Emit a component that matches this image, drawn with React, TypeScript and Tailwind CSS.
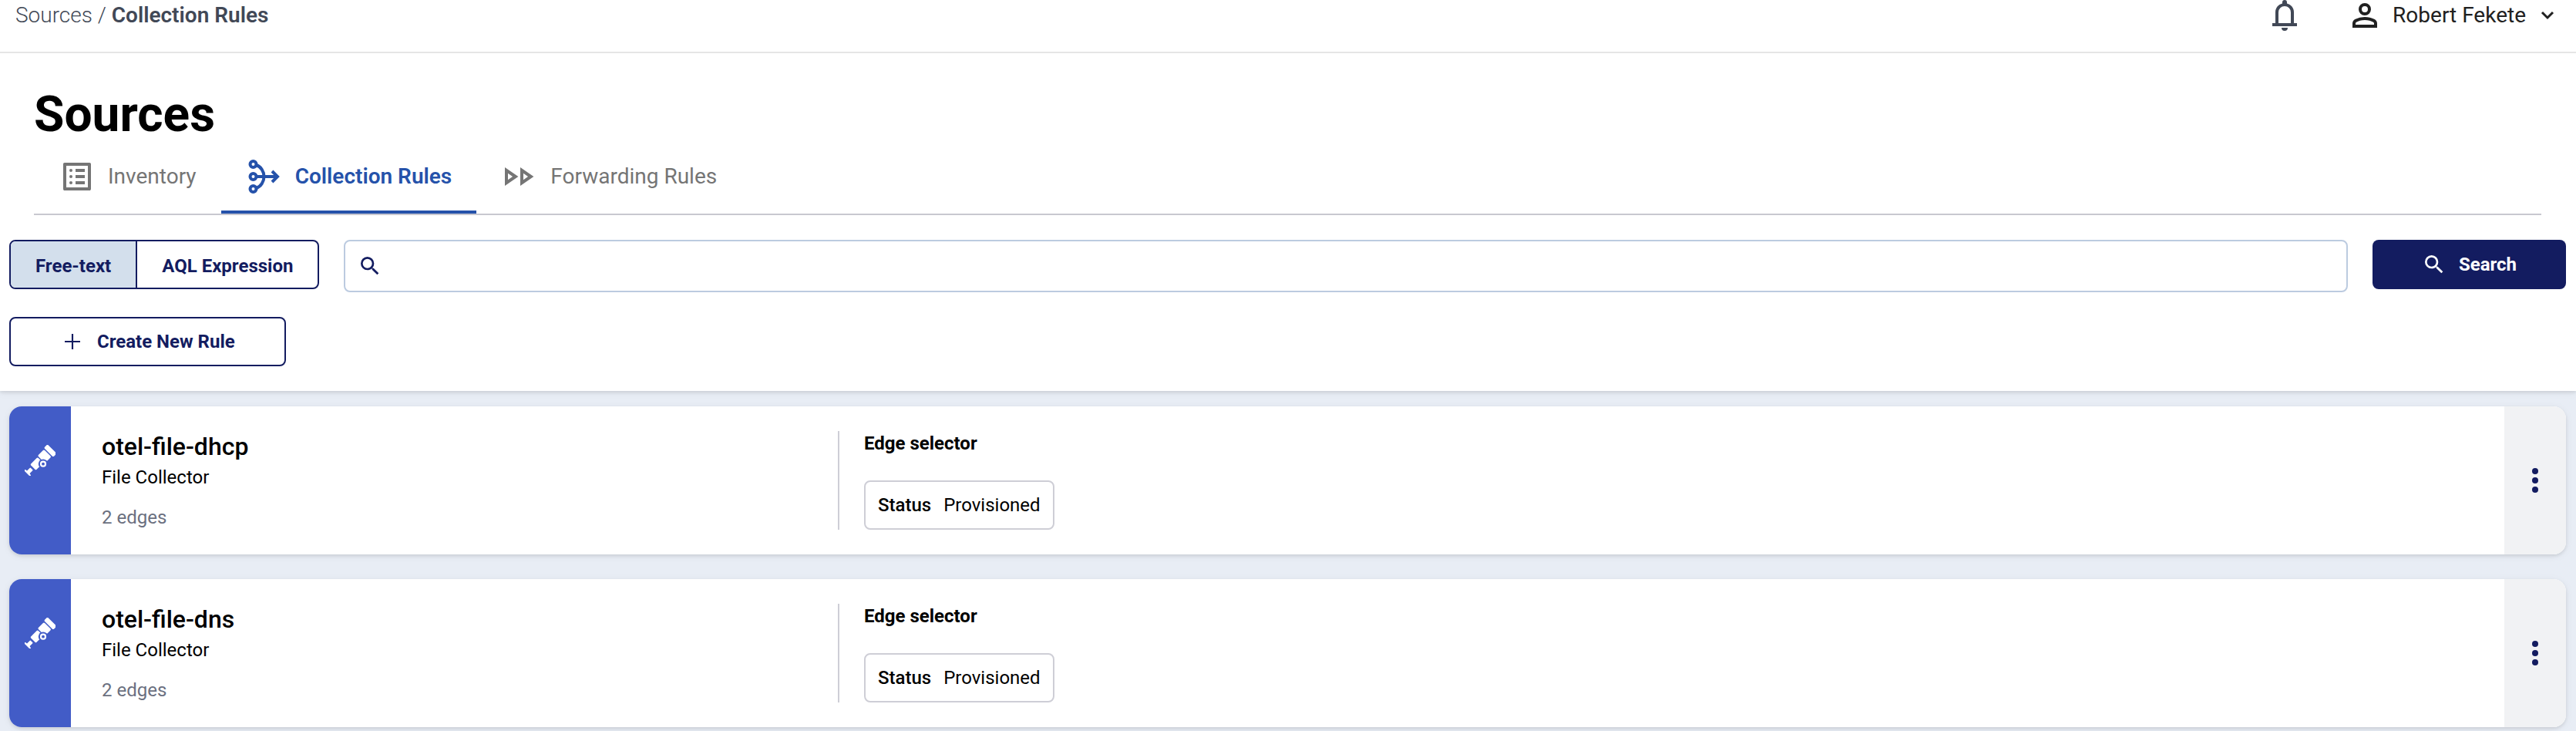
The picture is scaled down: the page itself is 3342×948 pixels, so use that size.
import { useState } from "react";

type Rule = {
  name: string;
  kind: string;
  edges: number;
  selector: { label: string; value: string };
};

const rules: Rule[] = [
  { name: "otel-file-dhcp", kind: "File Collector", edges: 2, selector: { label: "Status", value: "Provisioned" } },
  { name: "otel-file-dns", kind: "File Collector", edges: 2, selector: { label: "Status", value: "Provisioned" } },
];

const BellIcon = () => (
  <svg viewBox="0 0 24 24" className="size-12" fill="currentColor" aria-hidden="true">
    <path d="M4 19v-2h2v-7c0-1.38.42-2.61 1.25-3.69.83-1.07 1.92-1.78 3.25-2.11v-.7a1.5 1.5 0 0 1 3 0v.7c1.33.33 2.42 1.04 3.25 2.11.83 1.08 1.25 2.31 1.25 3.69v7h2v2H4zm8 3a2 2 0 0 1-2-2h4a2 2 0 0 1-2 2zm-4-5h8v-7a4 4 0 0 0-8 0v7z" />
  </svg>
);

const UserIcon = () => (
  <svg viewBox="0 0 24 24" className="size-12" fill="currentColor" aria-hidden="true">
    <path d="M12 12a4 4 0 1 1 0-8 4 4 0 0 1 0 8zm-8 8v-2.8c0-.57.15-1.09.44-1.56.29-.47.68-.83 1.16-1.09A14.76 14.76 0 0 1 12 13c2.2 0 4.33.52 6.4 1.55.48.26.87.62 1.16 1.09.29.47.44.99.44 1.56V20H4zm2-2h12v-.8a.97.97 0 0 0-.5-.85C16.15 15.67 14.3 15 12 15s-4.15.67-5.5 1.35a.97.97 0 0 0-.5.85v.8zm6-8a2 2 0 1 0 0-4 2 2 0 0 0 0 4z" />
  </svg>
);

const ChevronIcon = () => (
  <svg viewBox="0 0 24 24" className="size-6" fill="none" stroke="currentColor" strokeWidth="3" aria-hidden="true">
    <path d="M5 8l7 7 7-7" />
  </svg>
);

const InventoryIcon = () => (
  <svg viewBox="0 0 24 24" className="size-12" fill="currentColor" aria-hidden="true">
    <path d="M11 7h6v2h-6V7zm0 4h6v2h-6v-2zm0 4h6v2h-6v-2zM20.1 3H3.9c-.5 0-.9.4-.9.9v16.2c0 .4.4.9.9.9h16.2c.4 0 .9-.5.9-.9V3.9c0-.5-.5-.9-.9-.9zM19 19H5V5h14v14z" />
    <circle cx="8" cy="8" r="1" />
    <circle cx="8" cy="12" r="1" />
    <circle cx="8" cy="16" r="1" />
  </svg>
);

const CollectIcon = () => (
  <svg viewBox="0 0 48 48" className="size-12" fill="none" stroke="currentColor" strokeWidth="4" aria-hidden="true">
    <circle cx="9.5" cy="8" r="4" />
    <circle cx="9.5" cy="24" r="4" />
    <circle cx="9.5" cy="40" r="4" />
    <path d="M13.5 24h26M34 17l7 7-7 7M13.5 9c6 2 10 8.500 10 15s-4 13-10 15" />
  </svg>
);

const ForwardIcon = () => (
  <svg viewBox="0 0 24 24" className="size-12" fill="currentColor" aria-hidden="true">
    <path d="M14.500 9.860 17.530 12 14.500 14.140zM4.500 9.860 7.530 12 4.500 14.140zM12.500 6v12l8.700-6zM2.500 6v12l8.700-6z" fillRule="evenodd" />
  </svg>
);

const SearchIcon = () => (
  <svg viewBox="0 0 24 24" className="size-8" fill="currentColor" aria-hidden="true">
    <path d="M15.5 14h-.79l-.28-.27A6.47 6.47 0 0 0 16 9.5 6.5 6.5 0 1 0 9.5 16c1.61 0 3.09-.59 4.23-1.57l.27.28v.79l5 4.99L20.49 19l-4.99-5zm-6 0a4.5 4.5 0 1 1 0-9 4.5 4.5 0 0 1 0 9z" />
  </svg>
);

const PlusIcon = () => (
  <svg viewBox="0 0 24 24" className="size-8" fill="currentColor" aria-hidden="true">
    <path d="M19.500 12.800h-6.700v6.700h-1.600v-6.700H4.500v-1.600h6.700V4.500h1.600v6.700h6.700z" />
  </svg>
);

const TelescopeIcon = () => (
  <svg viewBox="0 0 40 40" className="size-10" fill="white" aria-hidden="true">
    <g transform="rotate(-45 20 20)">
      <rect x="35" y="12" width="6.5" height="17" rx="1.8" />
      <rect x="22" y="13.500" width="11.500" height="13.500" rx="1.5" />
      <rect x="7" y="14.800" width="13.500" height="10.400" rx="1.5" />
      <path d="M-4 15.500q0-1 1-1t1 1l.5 2h5q1 0 1 1v3q0 1-1 1h-5l-.5 2q0 1-1 1t-1-1z" />
    </g>
    <circle cx="24" cy="24.700" r="6.200" fill="#425cc7" />
    <circle cx="24" cy="24.700" r="3" fill="none" stroke="white" strokeWidth="2.2" />
  </svg>
);

const DotsIcon = () => (
  <svg viewBox="0 0 8 32" className="h-8 w-2" fill="currentColor" aria-hidden="true">
    <circle cx="4" cy="4" r="4" />
    <circle cx="4" cy="16" r="4" />
    <circle cx="4" cy="28" r="4" />
  </svg>
);

const tabs = [
  { name: "Inventory", icon: <InventoryIcon /> },
  { name: "Collection Rules", icon: <CollectIcon /> },
  { name: "Forwarding Rules", icon: <ForwardIcon /> },
];

const Header = () => (
  <header className="flex items-start justify-between border-b-2 border-[#e5e5e5] pr-[25px] pb-[27px] pl-5">
    <nav aria-label="Breadcrumb" className="text-[28px] leading-10 font-light text-[#414856]">
      <a href="#sources">Sources</a> / <span className="font-semibold">Collection Rules</span>
    </nav>
    <div className="flex h-10 items-center gap-14">
      <button aria-label="Notifications" className="text-[#414856]">
        <BellIcon />
      </button>
      <button className="flex items-center gap-3 text-[28px] text-[#212121]">
        <UserIcon />
        Robert Fekete
        <span className="pl-1">
          <ChevronIcon />
        </span>
      </button>
    </div>
  </header>
);

const RuleCard = ({ rule }: { rule: Rule }) => (
  <article className="flex overflow-hidden rounded-2xl bg-white shadow-[0_2px_4px_rgba(0,0,0,0.1),0_2px_12px_rgba(0,0,0,0.05)]">
    <div className="flex w-20 justify-center bg-[#425cc7] pt-[50px]">
      <TelescopeIcon />
    </div>
    <div className="flex flex-1 py-8 pl-10">
      <div className="w-[955px]">
        <h2 className="text-[32px] leading-10 font-medium">{rule.name}</h2>
        <p className="text-2xl leading-10">{rule.kind}</p>
        <p className="pt-4 text-2xl leading-8 text-[#6b7080]">{rule.edges} edges</p>
      </div>
      <div className="border-l-2 border-[#ceced6] pl-8">
        <h3 className="text-2xl leading-8 font-bold">Edge selector</h3>
        <div className="mt-8 flex h-16 items-center gap-4 rounded-lg border-2 border-[#ceced6] px-4 text-2xl">
          <span className="font-medium">{rule.selector.label}</span>
          <span>{rule.selector.value}</span>
        </div>
      </div>
    </div>
    <button aria-label={`Actions for ${rule.name}`} className="flex w-20 items-center justify-center bg-[#f1f2f4] text-[#131c60]">
      <DotsIcon />
    </button>
  </article>
);

const App = () => {
  const [tab, setTab] = useState("Collection Rules");
  const [mode, setMode] = useState("Free-text");
  const [query, setQuery] = useState("");

  return (
    <div className="min-h-screen bg-[#e8edf5] font-['Roboto',sans-serif] text-black">
      <div className="relative bg-white pb-8 shadow-[0_2px_4px_rgba(0,0,0,0.1),0_2px_12px_rgba(0,0,0,0.05)]">
        <Header />
        <div className="pt-10 pr-[45px] pl-11">
          <h1 className="text-[64px] leading-20 font-bold">Sources</h1>
          <div role="tablist" className="flex border-b-2 border-[#c8c8d0]">
            {tabs.map((el) => (
              <button
                key={el.name}
                role="tab"
                aria-selected={tab === el.name}
                onClick={() => setTab(el.name)}
                className={
                  tab === el.name
                    ? "flex h-[88px] items-center gap-4 border-b-4 border-[#2552aa] px-8 pb-1 text-[28px] font-semibold text-[#2552aa]"
                    : "flex h-[88px] items-center gap-4 border-b-4 border-transparent px-8 pb-1 text-[28px] text-[#757575]"
                }
              >
                {el.icon}
                {el.name}
              </button>
            ))}
          </div>
        </div>
        <div className="flex items-start gap-8 pt-8 pr-[13px] pl-3">
          <div className="flex h-16 overflow-hidden rounded-lg border-2 border-[#131c60] text-2xl font-bold text-[#131c60]">
            {["Free-text", "AQL Expression"].map((el) => (
              <button
                key={el}
                aria-pressed={mode === el}
                onClick={() => setMode(el)}
                className={
                  mode === el
                    ? "border-[#131c60] bg-[#d3dfec] px-8 pt-1 first:border-r-2 last:border-l-2"
                    : "px-8 pt-1"
                }
              >
                {el}
              </button>
            ))}
          </div>
          <label className="flex h-[68px] flex-1 items-center rounded-lg border-2 border-[#bccbe0] px-4 text-[#131c60]">
            <SearchIcon />
            <input
              aria-label="Search rules"
              value={query}
              onChange={(e) => setQuery(e.target.value)}
              className="ml-4 flex-1 text-2xl outline-none"
            />
          </label>
          <button className="flex h-16 w-[251px] items-center justify-center gap-4 rounded-lg bg-[#131c60] text-2xl font-bold text-white">
            <SearchIcon />
            Search
          </button>
        </div>
        <div className="px-3 pt-8">
          <button className="flex h-16 items-center gap-4 rounded-lg border-2 border-[#131c60] px-16 text-2xl font-bold text-[#131c60]">
            <PlusIcon />
            Create New Rule
          </button>
        </div>
      </div>
      <main className="flex flex-col gap-8 pt-5 pr-[13px] pl-3">
        {rules.map((el) => (
          <RuleCard key={el.name} rule={el} />
        ))}
      </main>
    </div>
  );
};

export default App;
